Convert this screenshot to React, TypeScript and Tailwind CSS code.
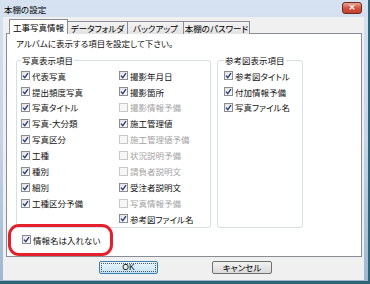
import React from "react"

const jp = "font-['Noto_Sans_CJK_JP','Noto_Sans',sans-serif] [font-feature-settings:'palt']"

interface Item {
    label: string
    checked: boolean
    disabled?: boolean
}

const col1: Item[] = [
    { label: "代表写真", checked: true },
    { label: "提出頻度写真", checked: true },
    { label: "写真タイトル", checked: true },
    { label: "写真-大分類", checked: true },
    { label: "写真区分", checked: true },
    { label: "工種", checked: true },
    { label: "種別", checked: true },
    { label: "細別", checked: true },
    { label: "工種区分予備", checked: true },
]

const col2: Item[] = [
    { label: "撮影年月日", checked: true },
    { label: "撮影箇所", checked: true },
    { label: "撮影情報予備", checked: false, disabled: true },
    { label: "施工管理値", checked: true },
    { label: "施工管理値予備", checked: false, disabled: true },
    { label: "状況説明予備", checked: false, disabled: true },
    { label: "請負者説明文", checked: false, disabled: true },
    { label: "受注者説明文", checked: true },
    { label: "写真情報予備", checked: false, disabled: true },
    { label: "参考図ファイル名", checked: true },
]

const col3: Item[] = [
    { label: "参考図タイトル", checked: true },
    { label: "付加情報予備", checked: true },
    { label: "写真ファイル名", checked: true },
]

const tabs = [
    { label: "工事写真情報", w: "w-[59px]" },
    { label: "データフォルダ", w: "w-[61px]" },
    { label: "バックアップ", w: "w-[57px]" },
    { label: "本棚のパスワード", w: "w-[67px]" },
]

const CheckBox = ({ checked, disabled }: { checked: boolean, disabled?: boolean }) => {
    return <div className={`w-[9px] h-[9px] shrink-0 border flex items-center justify-center ${disabled ? "border-[#c8c8c8] bg-[#f7f7f7]" : "border-[#8a8d92] bg-gradient-to-br from-[#e2e2e2] to-[#fbfbfb]"}`}>
        {checked && (
            <svg width="7" height="7" viewBox="0 0 7 7">
                <path d="M1 3.6 L2.8 5.6 L6 1.2" fill="none" stroke="#2a3f7a" strokeWidth="1.4" />
            </svg>
        )}
    </div>
}

const Row = ({ item }: { item: Item }) => {
    return <div className="h-[15.9px] flex items-center gap-[2px]">
        <CheckBox checked={item.checked} disabled={item.disabled} />
        <span className={`text-[8.5px] leading-none whitespace-nowrap ${item.disabled ? "text-[#a3a3a3]" : "text-[#111]"}`}>{item.label}</span>
    </div>
}

export default function App() {
    return <div className={`w-[370px] h-[284px] overflow-hidden flex flex-col bg-gradient-to-b from-[#d6e2f0] via-[#c4d5e9] to-[#9fb7cf] border-r-[2px] border-b-[3px] border-[#2f6479] pl-[3px] pr-[4px] pb-[1px] ${jp}`}>
        {/* title bar */}
        <div className="h-[17px] shrink-0 flex items-center justify-between pl-[1px] pr-[2px]">
            <span className="text-[8.5px] text-black leading-none mt-[1px]">本棚の設定</span>
            <div className="w-[20px] h-[12px] -mt-[2px] rounded-[3px] border border-[#6e2a22] bg-gradient-to-b from-[#e9a393] via-[#d0533f] to-[#c2402c] flex items-center justify-center">
                <span className="text-white text-[9px] font-bold leading-none font-['DejaVu_Sans',sans-serif]">×</span>
            </div>
        </div>

        {/* client */}
        <div className="flex-1 bg-[#f0f0f0] flex flex-col">
            {/* tabs */}
            <div className="flex items-end h-[17px] pl-[6px] relative z-10">
                {tabs.map((t, i) => (
                    <div key={t.label}
                        className={`${t.w} ${i === 0
                            ? "h-[15px] bg-white"
                            : "h-[13px] -ml-[1px] bg-gradient-to-b from-[#f3f3f3] to-[#e3e3e3]"} border border-b-0 border-[#898c95] flex items-center justify-center whitespace-nowrap text-[8.5px] leading-none text-black`}
                    >
                        {t.label}
                    </div>
                ))}
            </div>

            {/* panel */}
            <div className="ml-[3px] mr-[2px] -mt-[1px] h-[224px] bg-white border border-[#898c95] px-[9px] pt-[3px] relative">
                <div className="text-[8.5px] leading-[12px] text-[#111] whitespace-nowrap">アルバムに表示する項目を設定して下さい。</div>

                <div className="flex gap-[6px] mt-[5px]">
                    <fieldset className="w-[195px] h-[174px] border border-[#d5dfe5] rounded-[3px] pl-[4px]">
                        <legend className="px-[1px] text-[8.5px] leading-[12px] text-[#111]">写真表示項目</legend>
                        <div className="grid grid-cols-[98px_1fr] pt-[2px]">
                            <div className="flex flex-col">
                                {col1.map(item => <Row key={item.label} item={item} />)}
                            </div>
                            <div className="flex flex-col">
                                {col2.map(item => <Row key={item.label} item={item} />)}
                            </div>
                        </div>
                    </fieldset>
                    <fieldset className="w-[86px] h-[174px] border border-[#d5dfe5] rounded-[3px] pl-[6px]">
                        <legend className="px-[1px] text-[8.5px] leading-[12px] text-[#111]">参考図表示項目</legend>
                        <div className="flex flex-col pt-[2px]">
                            {col3.map(item => <Row key={item.label} item={item} />)}
                        </div>
                    </fieldset>
                </div>

                <div className="ml-[6px] mt-[4px]">
                    <Row item={{ label: "情報名は入れない", checked: true }} />
                </div>

                {/* red annotation */}
                <div className="absolute left-[1px] top-[190px] w-[105px] h-[32px] border-[3px] border-[#e3202b] rounded-[11px]"></div>
            </div>

            {/* buttons */}
            <div className="flex-1 flex items-center pb-[2px]">
                <div className="ml-[96px] w-[59px] h-[13px] border border-[#3c7fb1] rounded-[2px] bg-gradient-to-b from-[#eaf6fd] to-[#c4e5f6] flex items-center justify-center">
                    <div className="w-[55px] h-[9px] border border-dotted border-[#555] flex items-center justify-center text-[8.5px] leading-none text-black font-['Liberation_Sans',sans-serif]">OK</div>
                </div>
                <div className="ml-[54px] w-[60px] h-[13px] border border-[#707070] rounded-[2px] bg-gradient-to-b from-[#f2f2f2] to-[#dadada] flex items-center justify-center text-[8.5px] leading-none text-black">キャンセル</div>
            </div>
        </div>
    </div>
}
